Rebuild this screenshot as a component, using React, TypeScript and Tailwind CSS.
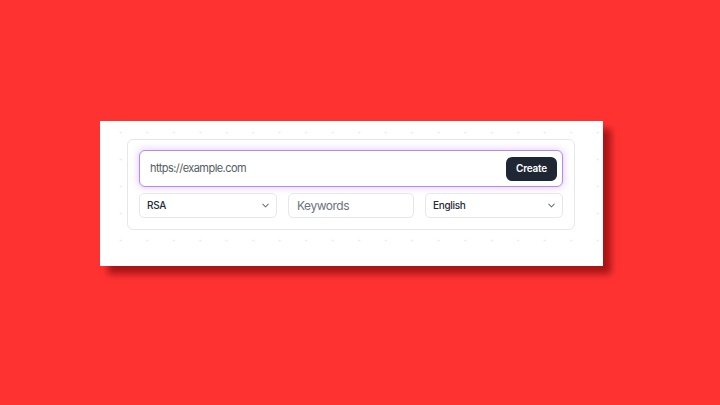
import React from "react";
import { ChevronDown } from "lucide-react";

function SelectBox({ label, className }: { label: string; className: string }) {
  return (
    <div
      className={`flex h-[25px] items-center justify-between rounded-[5px] border border-[#e5e7eb] bg-white pl-[7px] pr-[5px] ${className}`}
    >
      <span className="text-[10px] font-medium tracking-[-0.03em] text-[#1f2937]">{label}</span>
      <ChevronDown size={11} strokeWidth={2.2} className="text-[#6b7280]" />
    </div>
  );
}

export default function App() {
  return (
    <div
      className="h-[405px] w-[720px] overflow-hidden bg-[#ff3232] pl-[100px] pt-[121px]"
      style={{ fontFamily: "Inter, 'Noto Sans', sans-serif" }}
    >
      <div className="h-[145px] w-[503px] bg-white bg-[radial-gradient(circle,#e9e9ee_0.8px,transparent_1.2px)] bg-[size:26.5px_27px] bg-[position:-19px_-2px] pl-[27px] pt-[18px] shadow-[8px_8px_7px_rgba(110,0,0,0.6)]">
        <div className="flex w-[448px] flex-col gap-[6px] rounded-[6px] border border-[#e5e7eb] bg-white px-[11px] pb-[11px] pt-[10px]">
          <div className="flex h-[37px] items-center justify-between rounded-[6px] border-[1.5px] border-[#b987f5] bg-white pl-[10px] pr-[5px] shadow-[0_0_6px_2px_rgba(192,132,252,0.3)]">
            <span className="text-[11px] tracking-[-0.05em] text-[#555c66]">https://example.com</span>
            <button className="flex h-[24px] w-[51px] items-center justify-center rounded-[6px] bg-[#1f2734] text-[10px] font-semibold tracking-[-0.02em] text-white">
              Create
            </button>
          </div>
          <div className="flex gap-[11px]">
            <SelectBox label="RSA" className="w-[138px]" />
            <div className="flex h-[25px] w-[126px] items-center rounded-[5px] border border-[#e5e7eb] bg-white pl-[8px]">
              <span className="text-[12px] tracking-[-0.04em] text-[#6b7280]">Keywords</span>
            </div>
            <SelectBox label="English" className="w-[138px]" />
          </div>
        </div>
      </div>
    </div>
  );
}
